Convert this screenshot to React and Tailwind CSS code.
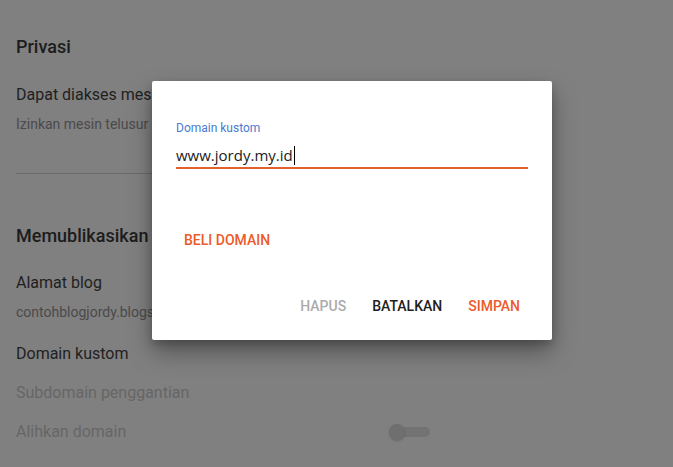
export default function App() {
  return (
    <div
      className="relative w-[673px] h-[467px] overflow-hidden bg-[#808080]"
      style={{ fontFamily: 'Roboto, "Liberation Sans", sans-serif' }}
    >
      <div className="pl-4 pt-[35px]">
        <div className="text-[18px] leading-6 font-medium text-[#1c1c1c]">Privasi</div>
        <div className="mt-6 text-[16px] leading-6 text-[#1f1f1f]">Dapat diakses mesin telusur</div>
        <div className="mt-[7px] text-[14px] leading-5 text-[#4a4a4a]">Izinkan mesin telusur menemukan blog Anda</div>
        <div className="mt-[39px] w-[414px] h-px bg-[#6a6a6a]" />
        <div className="mt-[50px] text-[18px] leading-6 font-medium text-[#1c1c1c]">Memublikasikan</div>
        <div className="mt-[23px] text-[16px] leading-6 text-[#1f1f1f]">Alamat blog</div>
        <div className="mt-[7px] text-[14px] leading-5 text-[#4a4a4a]">contohblogjordy.blogspot.com</div>
        <div className="mt-5 text-[16px] leading-6 text-[#1f1f1f]">Domain kustom</div>
        <div className="mt-[15px] text-[16px] leading-6 text-[#666666]">Subdomain penggantian</div>
        <div className="mt-[15px] flex items-center w-[414px]">
          <span className="text-[16px] leading-6 text-[#666666]">Alihkan domain</span>
          <span className="ml-auto relative flex items-center w-[41px] h-4">
            <span className="absolute left-[3px] right-0 h-[10px] rounded-full bg-[#737373]" />
            <span className="absolute left-0 w-4 h-4 rounded-full bg-[#6f6f6f] shadow-[0_1px_2px_rgba(0,0,0,0.2)]" />
          </span>
        </div>
      </div>

      <div className="absolute left-[152px] top-[81px] w-[400px] h-[259px] bg-white rounded-[2px] shadow-[0_12px_24px_rgba(0,0,0,0.35),0_4px_8px_rgba(0,0,0,0.2)] flex flex-col">
        <div className="px-6 pt-10">
          <div className="text-[12px] leading-[14px] text-[#4a7bd0]">Domain kustom</div>
          <div
            className="mt-2 h-6 flex items-center text-[15px] text-[#212121] border-b-2 border-[#e2622f] box-content"
            style={{ fontFamily: '"Open Sans", "Liberation Sans", sans-serif' }}
          >
            www.jordy.my.id
            <span className="inline-block w-px h-[19px] bg-black ml-px" />
          </div>
        </div>
        <div className="pl-6 mt-[53px]">
          <button className="h-9 px-2 text-[14px] font-medium uppercase text-[#ec5b2b]">Beli domain</button>
        </div>
        <div className="mt-[30px] pr-5 flex justify-end gap-0.5">
          <button className="h-9 px-3 text-[14px] font-medium uppercase text-[#ababab]">Hapus</button>
          <button className="h-9 px-3 text-[14px] font-medium uppercase text-[#212121]">Batalkan</button>
          <button className="h-9 px-3 text-[14px] font-medium uppercase text-[#ec5b2b]">Simpan</button>
        </div>
      </div>
    </div>
  )
}
